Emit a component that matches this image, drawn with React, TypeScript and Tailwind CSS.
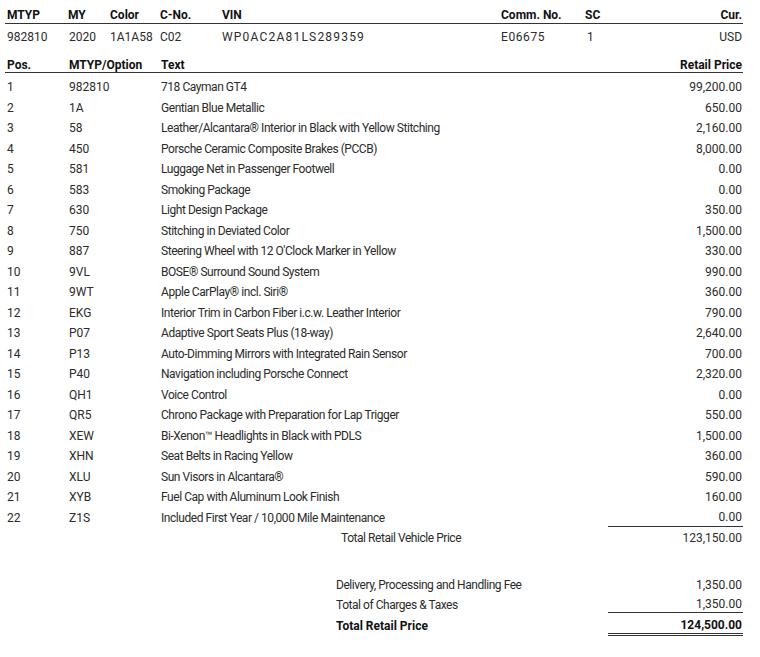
import React from 'react';

const items = [
  ['1', '982810', '718 Cayman GT4', '99,200.00'],
  ['2', '1A', 'Gentian Blue Metallic', '650.00'],
  ['3', '58', 'Leather/Alcantara® Interior in Black with Yellow Stitching', '2,160.00'],
  ['4', '450', 'Porsche Ceramic Composite Brakes (PCCB)', '8,000.00'],
  ['5', '581', 'Luggage Net in Passenger Footwell', '0.00'],
  ['6', '583', 'Smoking Package', '0.00'],
  ['7', '630', 'Light Design Package', '350.00'],
  ['8', '750', 'Stitching in Deviated Color', '1,500.00'],
  ['9', '887', "Steering Wheel with 12 O'Clock Marker in Yellow", '330.00'],
  ['10', '9VL', 'BOSE® Surround Sound System', '990.00'],
  ['11', '9WT', 'Apple CarPlay® incl. Siri®', '360.00'],
  ['12', 'EKG', 'Interior Trim in Carbon Fiber i.c.w. Leather Interior', '790.00'],
  ['13', 'P07', 'Adaptive Sport Seats Plus (18-way)', '2,640.00'],
  ['14', 'P13', 'Auto-Dimming Mirrors with Integrated Rain Sensor', '700.00'],
  ['15', 'P40', 'Navigation including Porsche Connect', '2,320.00'],
  ['16', 'QH1', 'Voice Control', '0.00'],
  ['17', 'QR5', 'Chrono Package with Preparation for Lap Trigger', '550.00'],
  ['18', 'XEW', 'Bi-Xenon™ Headlights in Black with PDLS', '1,500.00'],
  ['19', 'XHN', 'Seat Belts in Racing Yellow', '360.00'],
  ['20', 'XLU', 'Sun Visors in Alcantara®', '590.00'],
  ['21', 'XYB', 'Fuel Cap with Aluminum Look Finish', '160.00'],
  ['22', 'Z1S', 'Included First Year / 10,000 Mile Maintenance', '0.00'],
];

export default function App() {
  return (
    <div className="w-[760px] h-[657px] bg-white text-[#2b2b2b] text-[12px] font-['Roboto','Liberation_Sans',sans-serif] overflow-hidden">
      <div className="ml-[5px] w-[738px] pt-[8px]">
        {/* vehicle header */}
        <div className="flex h-[16px] leading-[15px] border-b border-[#333] font-bold text-[#111]">
          <span className="pl-[2px] w-[63px]">MTYP</span>
          <span className="w-[42px]">MY</span>
          <span className="w-[50px]">Color</span>
          <span className="w-[62px]">C-No.</span>
          <span className="w-[279px]">VIN</span>
          <span className="w-[84px]">Comm. No.</span>
          <span className="w-[60px]">SC</span>
          <span className="flex-1 text-right pr-[1px]">Cur.</span>
        </div>
        <div className="flex leading-[26px]">
          <span className="pl-[2px] w-[64px]">982810</span>
          <span className="w-[41px]">2020</span>
          <span className="w-[50px]">1A1A58</span>
          <span className="w-[62px]">C02</span>
          <span className="w-[279px] tracking-[1.2px]">WP0AC2A81LS289359</span>
          <span className="w-[86px] tracking-[0.6px]">E06675</span>
          <span className="w-[58px]">1</span>
          <span className="flex-1 text-right pr-[1px]">USD</span>
        </div>

        {/* options header */}
        <div className="flex pt-[8px] h-[23px] leading-[14px] border-b border-[#333] font-bold text-[#111]">
          <span className="pl-[2px] w-[64px]">Pos.</span>
          <span className="w-[92px]">MTYP/Option</span>
          <span className="flex-1">Text</span>
          <span className="text-right pr-[1px]">Retail Price</span>
        </div>

        <div className="pt-[4px]">
          {items.map((row, i) => (
            <div key={row[0]} className="flex h-[20.5px] leading-[20.5px]">
              <span className="pl-[2px] w-[64px]">{row[0]}</span>
              <span className="w-[92px]">{row[1]}</span>
              <span className="flex-1 tracking-[-0.45px]">{row[2]}</span>
              <span
                className={
                  i === items.length - 1
                    ? 'w-[135px] h-[19px] leading-[19px] text-right pr-[1px] border-b border-[#333]'
                    : 'text-right pr-[1px]'
                }
              >
                {row[3]}
              </span>
            </div>
          ))}
        </div>

        {/* totals */}
        <div className="flex h-[20.5px] leading-[20.5px]">
          <span className="pl-[336px] flex-1 tracking-[-0.45px]">Total Retail Vehicle Price</span>
          <span className="text-right pr-[1px]">123,150.00</span>
        </div>

        <div className="mt-[26px]">
          <div className="flex h-[20.5px] leading-[20.5px]">
            <span className="pl-[331px] flex-1 tracking-[-0.45px]">Delivery, Processing and Handling Fee</span>
            <span className="text-right pr-[1px]">1,350.00</span>
          </div>
          <div className="flex h-[20.5px] leading-[20.5px]">
            <span className="pl-[331px] flex-1 tracking-[-0.45px]">Total of Charges &amp; Taxes</span>
            <span className="w-[135px] h-[18px] leading-[18px] text-right pr-[1px] border-b border-[#333]">1,350.00</span>
          </div>
          <div className="flex h-[20.5px] leading-[20.5px] font-bold text-[#111]">
            <span className="pl-[331px] flex-1">Total Retail Price</span>
            <span className="w-[135px] h-[20px] leading-[18px] text-right pr-[1px] border-b-[3px] border-double border-[#333]">124,500.00</span>
          </div>
        </div>
      </div>
    </div>
  );
}
